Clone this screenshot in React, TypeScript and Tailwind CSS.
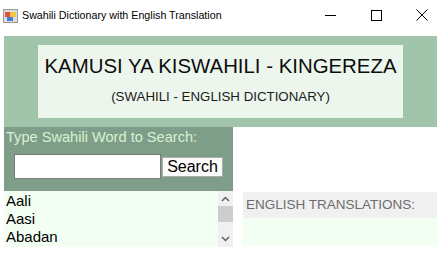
import React from 'react';

const words = ['Aali', 'Aasi', 'Abadan'];

const TitleBar: React.FC = () => (
    <div className="flex items-center h-[30px] bg-white">
        <svg width="15" height="14" viewBox="0 0 15 14" className="ml-[3px] mr-[4px] mt-[1px]">
            <rect x="0.5" y="0.5" width="14" height="13" fill="#dcdcdc" stroke="#9a9a9a" />
            <rect x="2" y="3" width="5" height="5" fill="#e0503c" />
            <rect x="7" y="3" width="6" height="5" fill="#f4c542" />
            <rect x="4" y="8" width="6" height="4" fill="#3f7fd6" />
        </svg>
        <span className="text-[10.7px] text-black" style={{ fontFamily: '"Liberation Sans", Arial, sans-serif' }}>
            Swahili Dictionary with English Translation
        </span>
        <div className="ml-auto flex items-center h-full">
            <div className="w-[46px] h-full flex items-center justify-center">
                <div className="w-[11px] h-px bg-black" />
            </div>
            <div className="w-[46px] h-full flex items-center justify-center">
                <div className="w-[11px] h-[11px] border border-black" />
            </div>
            <div className="w-[46px] h-full flex items-center justify-center">
                <svg width="12" height="12" viewBox="0 0 12 12">
                    <path d="M0.5 0.5 L11.5 11.5 M11.5 0.5 L0.5 11.5" stroke="#000" strokeWidth="1" />
                </svg>
            </div>
        </div>
    </div>
);

export default function App() {
    return (
        <div className="w-[445px] h-[253px] bg-white overflow-hidden" style={{ fontFamily: '"Liberation Sans", Arial, sans-serif' }}>
            <TitleBar />
            <div className="ml-[4px] mt-[6px] w-[433px] h-[91px] bg-[#a1c5ab] pt-[9px] pl-[34px]">
                <div className="w-[365px] h-[73px] bg-[#edf6ed] flex flex-col items-center">
                    <div className="mt-[9px] text-[20.4px] leading-[24px] text-[#0d0d0d]">KAMUSI YA KISWAHILI - KINGEREZA</div>
                    <div className="mt-[11px] text-[13.3px] leading-[16px] text-[#1a1a1a]">(SWAHILI - ENGLISH DICTIONARY)</div>
                </div>
            </div>
            <div className="flex ml-[4px]">
                <div className="w-[229px]">
                    <div className="h-[64px] bg-[#7f9e8a] pt-[1px]">
                        <div className="pl-[2px] text-[14.6px] leading-[18px] text-[#d9f2cf]">Type Swahili Word to Search:</div>
                        <div className="flex items-center mt-[8px] ml-[10px]">
                            <div className="w-[147px] h-[25px] bg-white border border-[#7a7a7a]" />
                            <button className="ml-[1px] w-[61px] h-[20px] bg-[#fbfbfb] border border-[#adadad] text-[16px] leading-[18px] text-black">
                                Search
                            </button>
                        </div>
                    </div>
                    <div className="flex h-[56px] bg-[#f4fff4]">
                        <div className="flex-1 pl-[2px] pt-[1px]">
                            {words.map((w) => (
                                <div key={w} className="text-[15px] leading-[18px] text-black">{w}</div>
                            ))}
                        </div>
                        <div className="w-[15px] bg-[#f0f0f0] flex flex-col items-center">
                            <svg width="9" height="6" viewBox="0 0 9 6" className="mt-[5px]">
                                <path d="M1 5 L4.5 1.5 L8 5" stroke="#606060" strokeWidth="1.5" fill="none" />
                            </svg>
                            <div className="mt-[4px] w-[15px] h-[16px] bg-[#cdcdcd]" />
                            <svg width="9" height="6" viewBox="0 0 9 6" className="mt-auto mb-[5px]">
                                <path d="M1 1 L4.5 4.5 L8 1" stroke="#606060" strokeWidth="1.5" fill="none" />
                            </svg>
                        </div>
                    </div>
                </div>
                <div className="ml-[10px] w-[194px] pt-[65px]">
                    <div className="h-[26px] bg-[#f0f0f0] flex items-center pl-[3px] text-[13.5px] text-[#6d6d6d]">
                        ENGLISH TRANSLATIONS:
                    </div>
                    <div className="h-[28px] bg-[#f4fff4]" />
                </div>
            </div>
        </div>
    );
}
